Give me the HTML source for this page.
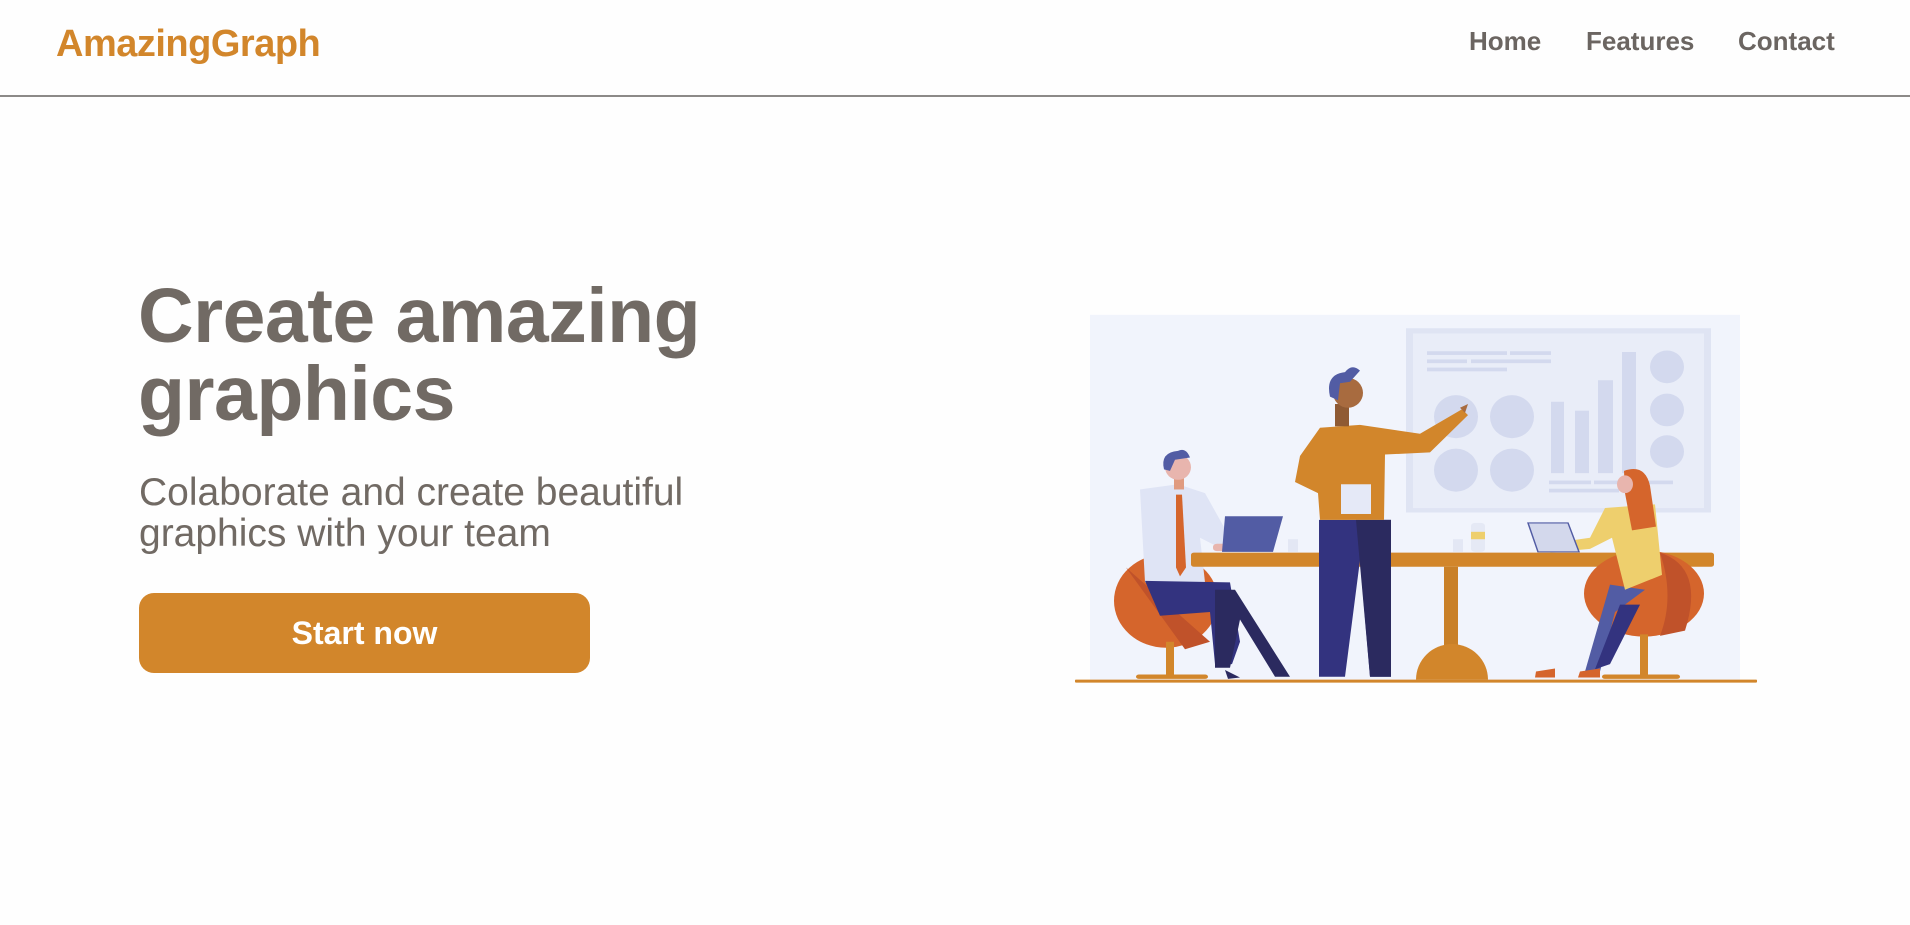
<!DOCTYPE html>
<html><head><meta charset="utf-8"><style>
*{margin:0;padding:0;box-sizing:border-box}
body{width:1910px;height:925px;background:#fefefe;font-family:"Liberation Sans",Arial,sans-serif;position:relative;overflow:hidden}
.hdr{position:absolute;left:0;top:0;width:1910px;height:97px;border-bottom:2px solid #8c8a88}
.logo{position:absolute;left:56px;top:23px;font-size:38px;font-weight:bold;color:#d2862b;letter-spacing:-0.5px}
.nav{position:absolute;top:26px;font-size:26px;font-weight:bold;color:#6b6561}
h1{position:absolute;left:138px;top:277px;font-size:77px;line-height:78px;color:#716a64;font-weight:bold;letter-spacing:-0.5px}
.sub{position:absolute;left:139px;top:472px;font-size:39px;line-height:41px;color:#716a64}
.btn{position:absolute;left:139px;top:593px;width:451px;height:80px;border-radius:15px;background:#d2862b;color:#fff;font-size:32px;font-weight:bold;text-align:center;line-height:80px}
svg{position:absolute;left:0;top:0}
</style></head><body>
<div class="hdr"></div>
<div class="logo">AmazingGraph</div>
<div class="nav" style="left:1469px">Home</div>
<div class="nav" style="left:1586px">Features</div>
<div class="nav" style="left:1738px">Contact</div>
<h1>Create amazing<br>graphics</h1>
<div class="sub">Colaborate and create beautiful<br>graphics with your team</div>
<div class="btn">Start now</div>
<svg width="1910" height="925" viewBox="0 0 1910 925">
<g transform="translate(0,300) scale(1,0.743) translate(0,-300)">
<rect x="1090" y="320" width="650" height="493" fill="#f1f4fc"/>
<rect x="1406" y="338" width="305" height="248" fill="#dfe4f3"/>
<rect x="1413" y="345" width="291" height="235" fill="#e9edf8"/>
<g fill="#d3d9ee">
<rect x="1427" y="369" width="80" height="5"/><rect x="1510" y="369" width="41" height="5"/>
<rect x="1427" y="380" width="40" height="5"/><rect x="1471" y="380" width="80" height="5"/>
<rect x="1427" y="391" width="80" height="5"/>
<rect x="1551" y="437" width="13" height="96"/><rect x="1575" y="449" width="14" height="84"/>
<rect x="1598" y="408" width="15" height="125"/><rect x="1622" y="370" width="14" height="163"/>
<rect x="1549" y="543" width="42" height="5"/><rect x="1594" y="543" width="79" height="5"/>
<rect x="1549" y="554" width="70" height="5"/>
<ellipse cx="1456" cy="457" rx="22" ry="29"/><ellipse cx="1512" cy="457" rx="22" ry="29"/>
<ellipse cx="1456" cy="529" rx="22" ry="29"/><ellipse cx="1512" cy="529" rx="22" ry="29"/>
<ellipse cx="1667" cy="390" rx="17" ry="22"/><ellipse cx="1667" cy="448" rx="17" ry="22"/><ellipse cx="1667" cy="504" rx="17" ry="22"/>
</g>
<ellipse cx="1166" cy="705" rx="52" ry="63" fill="#d5652c"/>
<path d="M1126 660 L1185 770 L1210 760 Z" fill="#c0522a"/>
<rect x="1166" y="760" width="8" height="48" fill="#d2862b"/>
<rect x="1136" y="804" width="72" height="6" rx="3" fill="#d2862b"/>
<path d="M1140 555 L1178 548 L1205 560 L1230 620 L1222 635 L1200 620 L1205 680 L1145 680 Z" fill="#dfe4f5"/>
<rect x="1174" y="540" width="10" height="15" fill="#e09b80"/>
<ellipse cx="1178" cy="525" rx="13" ry="17" fill="#e8b5ae"/>
<path d="M1164 528 Q1160 505 1178 503 Q1186 498 1190 512 L1175 515 L1170 530 Z" fill="#525ca4"/>
<path d="M1176 562 L1182 562 L1186 660 L1180 672 L1176 660 Z" fill="#d5652c"/>
<path d="M1145 678 L1230 680 L1240 760 L1232 790 L1215 790 L1210 720 L1160 725 Z" fill="#33337f"/>
<path d="M1215 690 L1235 690 L1290 807 L1275 807 L1240 730 L1230 795 L1215 795 Z" fill="#2b2a5f"/>
<rect x="1213" y="628" width="15" height="10" rx="4" fill="#e8b5ae"/>
<path d="M1225 591 L1283 591 L1273 639 L1222 639 Z" fill="#525ca4"/>
<rect x="1191" y="640" width="523" height="19" rx="3" fill="#d2862b"/>
<rect x="1444" y="659" width="14" height="125" fill="#c98028"/>
<path d="M1416 811 A36 48 0 0 1 1488 811 Z" fill="#d2862b"/>
<rect x="1471" y="600" width="14" height="39" rx="4" fill="#e5e9f5"/>
<rect x="1471" y="612" width="14" height="10" fill="#eecf6d"/>
<rect x="1288" y="622" width="10" height="17" fill="#e3e7f4"/>
<rect x="1453" y="622" width="10" height="17" fill="#e3e7f4"/>
<path d="M1319 596 L1391 596 L1391 807 L1370 807 L1360 650 L1345 807 L1319 807 Z" fill="#33337f"/>
<path d="M1356 596 L1391 596 L1391 807 L1370 807 Z" fill="#2b2a5f"/>
<path d="M1320 472 L1360 468 L1420 480 L1462 447 L1468 455 L1430 505 L1385 508 L1384 596 L1320 596 L1318 560 L1295 545 L1300 510 Z" fill="#d2862b"/>
<rect x="1335" y="440" width="14" height="30" fill="#8f5a33"/>
<ellipse cx="1348" cy="425" rx="15" ry="20" fill="#a86b3f"/>
<path d="M1330 430 Q1325 400 1345 397 Q1352 385 1360 395 L1350 410 L1340 412 L1338 435 Z" fill="#525ca4"/>
<path d="M1460 445 L1468 440 L1465 452 Z" fill="#a86b3f"/>
<rect x="1341" y="548" width="30" height="40" fill="#e5e9f7"/>
<ellipse cx="1644" cy="695" rx="60" ry="58" fill="#d5652c"/>
<path d="M1660 640 Q1705 660 1685 745 L1660 752 Q1675 700 1660 640 Z" fill="#c0522a"/>
<rect x="1640" y="750" width="8" height="58" fill="#d2862b"/>
<rect x="1602" y="804" width="78" height="6" rx="3" fill="#d2862b"/>
<path d="M1610 683 L1645 690 L1615 720 L1600 800 L1585 800 Z" fill="#525ca4"/>
<path d="M1620 710 L1640 710 L1610 790 L1595 797 Z" fill="#33337f"/>
<path d="M1605 580 L1655 575 L1662 670 L1625 690 L1612 620 L1590 635 L1550 640 L1548 628 L1590 620 Z" fill="#eecf6d"/>
<path d="M1624 530 Q1645 520 1650 550 L1656 605 L1632 610 L1625 560 Z" fill="#d5652c"/>
<ellipse cx="1625" cy="548" rx="8" ry="12" fill="#e8b5ae"/>
<path d="M1528 600 L1568 600 L1579 639 L1538 639 Z" fill="#d3d8ec" stroke="#525ca4" stroke-width="1.5"/>
<path d="M1536 800 L1555 796 L1555 808 L1535 808 Z" fill="#d5652c"/>
<path d="M1580 800 L1600 796 L1600 808 L1578 808 Z" fill="#d5652c"/>
<path d="M1225 798 L1240 808 L1228 810 Z" fill="#2b2a5f"/>
<rect x="1075" y="811" width="682" height="4" rx="1" fill="#d2862b"/>
</g>
</svg>
</body></html>
